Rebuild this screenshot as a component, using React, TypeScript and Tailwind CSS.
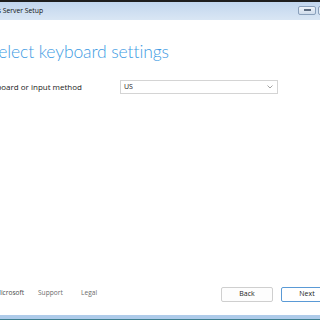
import React from "react";

export default function App() {
  const font = { fontFamily: '"Open Sans", "Noto Sans", sans-serif' };
  return (
    <div className="w-[320px] h-[320px] overflow-hidden flex flex-col bg-white" style={font}>
      {/* title bar */}
      <div className="h-[20px] shrink-0 border-t-[2px] border-[#1e1e1e] bg-gradient-to-b from-[#c2d6ee] to-[#d9e6f4] flex items-center">
        <div className="ml-[-28px] text-[6.8px] leading-none text-[#111] whitespace-nowrap">Windows Server Setup</div>
        <div className="flex-1" />
        <div className="w-[18px] h-[9px] mt-[-2px] rounded-[2px] border border-[#8aa0bb] bg-gradient-to-b from-[#eef3f9] to-[#cfdcec] flex items-center justify-center">
          <div className="w-[7px] h-[2px] bg-[#5b6b80]" />
        </div>
        <div className="w-[18px] h-[9px] mt-[-2px] ml-[2px] mr-[-16px] rounded-[2px] border border-[#8aa0bb] bg-[#e3ebf5]" />
      </div>

      {/* content */}
      <div className="flex-1 flex flex-col">
        <div
          className="mt-[23px] ml-[-11px] text-[17.5px] font-light leading-none tracking-[-0.1px] text-[#3d9be3] whitespace-nowrap"
          style={{ fontFamily: 'Lato, "Open Sans", sans-serif' }}
        >
          Select keyboard settings
        </div>
        <div className="mt-[19px] flex items-center">
          <div className="w-[120px] text-[8px] text-[#222] whitespace-nowrap">
            <span className="ml-[-17px]">Keyboard or input method</span>
          </div>
          <div className="w-[158px] h-[14px] border border-[#d4d4d4] flex items-center px-[3px]">
            <span className="text-[7px] text-[#222] leading-none">US</span>
            <div className="flex-1" />
            <svg width="6" height="4" viewBox="0 0 6 4" className="mr-[1px]">
              <path d="M0.5 0.5 L3 3 L5.5 0.5" fill="none" stroke="#8a8a8a" strokeWidth="0.8" />
            </svg>
          </div>
        </div>
        <div className="flex-1" />
        <div className="flex items-center mb-[13px]">
          <div className="flex items-center ml-[-5px] mt-[-3px] text-[6.6px] text-[#6b6b6b] leading-none">
            <span className="w-[43px] text-[#4a4a4a]">Microsoft</span>
            <span className="w-[43px]">Support</span>
            <span>Legal</span>
          </div>
          <div className="flex-1" />
          <div className="w-[52px] h-[15px] rounded-[2px] border border-[#cfcfcf] bg-[#fdfdfd] flex items-center justify-center text-[7px] text-[#222]">
            Back
          </div>
          <div className="ml-[8px] mr-[-13px] w-[52px] h-[15px] rounded-[2px] border border-[#5a9ad6] bg-white flex items-center justify-center text-[7px] text-[#222]">
            Next
          </div>
        </div>
      </div>

      {/* bottom border */}
      <div className="h-[4px] shrink-0 bg-[#aecbea]" />
      <div className="h-[1px] shrink-0 bg-[#3e7f8f]" />
    </div>
  );
}
